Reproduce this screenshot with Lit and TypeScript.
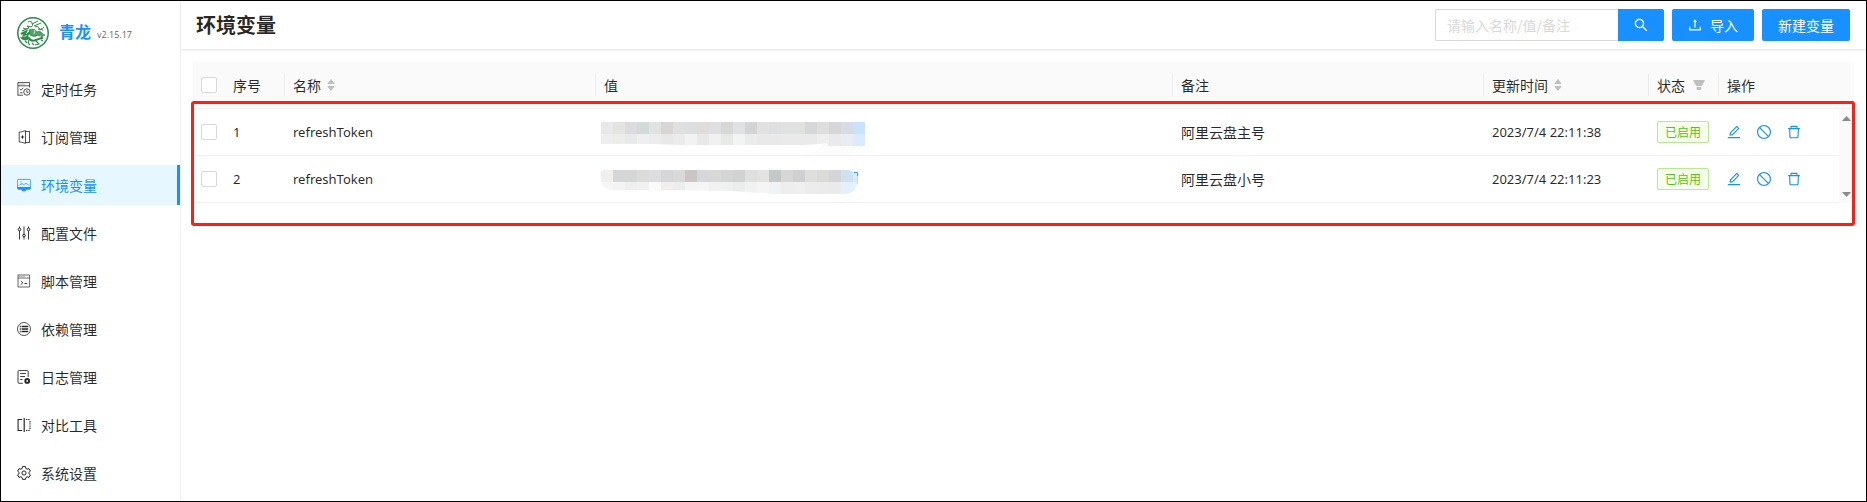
import { LitElement, html, css, svg } from "lit";
import { customElement, state } from "lit/decorators.js";

const stroke = (body: unknown) => html`<svg
  class="icon"
  viewBox="0 0 14 14"
  fill="none"
  stroke="currentColor"
  aria-hidden="true"
>
  ${body}
</svg>`;

const solid = (d: string) => html`<svg
  class="icon"
  viewBox="64 64 896 896"
  fill="currentColor"
  aria-hidden="true"
>
  <path d=${d}></path>
</svg>`;

const icons = {
  search: solid(
    "M909.6 854.5L649.9 594.8C690.2 542.7 712 479 712 412c0-80.2-31.3-155.4-87.9-212.1-56.6-56.7-132-87.9-212.1-87.9s-155.5 31.3-212.1 87.9C143.2 256.5 112 331.8 112 412c0 80.1 31.3 155.5 87.9 212.1C256.5 680.8 331.8 712 412 712c67 0 130.6-21.8 182.7-62l259.7 259.6a8.2 8.2 0 0011.6 0l43.6-43.5a8.2 8.2 0 000-11.6zM570.4 570.4C528 612.7 471.8 636 412 636s-116-23.3-158.4-65.6C211.3 528 188 471.8 188 412s23.3-116.1 65.6-158.4C296 211.3 352.2 188 412 188s116.1 23.2 158.4 65.6S636 352.2 636 412s-23.3 116.1-65.6 158.4z"
  ),
  upload: solid(
    "M400 317.7h73.9V656c0 4.4 3.6 8 8 8h60c4.4 0 8-3.6 8-8V317.7H624c6.7 0 10.4-7.7 6.3-12.9L518.3 163a8 8 0 00-12.6 0l-112 141.7c-4.1 5.3-.4 13 6.3 13zM878 626h-60c-4.4 0-8 3.6-8 8v154H214V634c0-4.4-3.6-8-8-8h-60c-4.4 0-8 3.6-8 8v198c0 17.7 14.3 32 32 32h684c17.7 0 32-14.3 32-32V634c0-4.4-3.6-8-8-8z"
  ),
  edit: solid(
    "M257.7 752c2 0 4-.2 6-.5L431.9 722c2-.4 3.9-1.3 5.3-2.8l423.9-423.9a9.96 9.96 0 000-14.1L694.9 114.9c-1.9-1.9-4.4-2.9-7.1-2.9s-5.2 1-7.1 2.9L256.8 538.8c-1.5 1.5-2.4 3.3-2.8 5.3l-29.5 168.2a33.5 33.5 0 009.4 29.8c6.6 6.4 14.9 9.9 23.8 9.9zm67.4-174.4L687.8 215l73.3 73.3-362.7 362.6-88.9 15.7 15.6-89zM880 836H144c-17.7 0-32 14.3-32 32v36c0 4.4 3.6 8 8 8h784c4.4 0 8-3.6 8-8v-36c0-17.7-14.3-32-32-32z"
  ),
  stop: solid(
    "M512 64C264.6 64 64 264.6 64 512s200.6 448 448 448 448-200.6 448-448S759.4 64 512 64zm0 820c-205.4 0-372-166.6-372-372 0-89 31.3-170.8 83.5-234.8l523.3 523.3C682.8 852.7 601 884 512 884zm288.5-137.2L277.2 223.5C341.2 171.3 423 140 512 140c205.4 0 372 166.6 372 372 0 89-31.3 170.8-83.5 234.8z"
  ),
  remove: solid(
    "M360 184h-8c4.4 0 8-3.6 8-8v8h304v-8c0 4.4 3.6 8 8 8h-8v72h72v-80c0-35.3-28.7-64-64-64H352c-35.3 0-64 28.7-64 64v80h72v-72zm504 72H160c-17.7 0-32 14.3-32 32v32c0 4.4 3.6 8 8 8h60.4l24.7 523c1.6 34.1 29.8 61 63.9 61h454c34.2 0 62.3-26.8 63.9-61l24.7-523H888c4.4 0 8-3.6 8-8v-32c0-17.7-14.3-32-32-32zM731.3 840H292.7l-24.2-512h487l-24.2 512z"
  ),
  task: stroke(svg`
    <path d="M.9 13.500V.6H12.600V5.500M1 3.800H12.500M.9 13.200H6" stroke-width=".8"/>
    <path d="M2.500 2.200H3.500M4.500 2.200H5.500M6.500 2.200H7.500" stroke-width=".6"/>
    <path d="M2.800 7L4 8.200L6.400 5.800M2.800 10.800H5.500" stroke-width=".8"/>
    <circle cx="9.900" cy="10" r="3.200" stroke-width=".8"/>
    <path d="M9.900 8.200V10.300H11.600" stroke-width=".8"/>`),
  subscribe: stroke(svg`
    <path d="M4 2L8.500 .6V13.400L4 12H2.200V2Z" stroke-width=".8"/>
    <path d="M8.500 1.500H12.500V12.500H8.500" stroke-width=".8"/>
    <path d="M5.500 5.300V8.700M3.800 7H7.200" stroke-width=".9"/>`),
  env: stroke(svg`
    <rect x=".4" y="1.400" width="13.200" height="9.600" rx=".9" stroke-width=".8"/>
    <path d="M.4 9H13.600V10.500Q13.600 11.400 12.700 11.400H1.300Q.4 11.400 .4 10.500Z" fill="currentColor" stroke="none"/>
    <path d="M2 7.600C3.600 5.800 4.600 5.400 6 6.200S8.400 5.200 9.600 5.600S11.600 7 12.200 7.800" stroke-width=".8"/>
    <circle cx="4" cy="3.900" r=".6" fill="currentColor" stroke="none"/>
    <path d="M4 11.300H10L8.600 13.200H5.400Z" fill="currentColor" stroke="none"/>`),
  config: stroke(svg`
    <path d="M2.500 5V13.500M2.500 .5V2M7 .5V8M7 11V13.500M11.500 5V13.500M11.500 .5V2" stroke-width=".9"/>
    <circle cx="2.500" cy="3.500" r="1.300"/>
    <circle cx="7" cy="9.500" r="1.300"/>
    <circle cx="11.500" cy="3.500" r="1.300"/>`),
  script: stroke(svg`
    <path d="M1 1H12.600V13H1ZM1 4H12.600" stroke-width=".7"/>
    <path d="M2.500 2.500H3.500M4.500 2.500H5.500M6.500 2.500H7.500" stroke-width=".6"/>
    <path d="M3.800 7L5.800 8.800L3.800 10.600M7.500 9.500H10.200" stroke-width=".9"/>`),
  deps: stroke(svg`
    <circle cx="7" cy="7" r="6.500" stroke-width=".8"/>
    <path d="M2.800 4.500H3.800M4.600 4.500H11.200M2.800 7H3.800M4.600 7H11.200M2.800 9.500H3.800M4.600 9.500H11.200" stroke-width="1.500"/>`),
  log: stroke(svg`
    <path d="M5.800 13.300H2Q1 13.300 1 12.300V1.600Q1 .6 2 .6H10.200Q11.200 .6 11.200 1.600V7" stroke-width=".9"/>
    <path d="M3.200 3.500H9M3.200 6.500H8M3.200 9.500H5.500" stroke-width=".9"/>
    <circle cx="10.200" cy="10.900" r="1.900" stroke-width="1.900"/>`),
  diff: stroke(svg`
    <path d="M5 1.500H1.100V12.500H5" stroke-width="1.100"/>
    <path d="M7.200 0V14" stroke-width="1.200"/>
    <path d="M9 1.500H13.400M9 12.500H13.400M13 3V12" stroke-dasharray="1.400 .8" stroke-width="1.100"/>`),
  settings: stroke(svg`
    <path stroke-width="1" stroke-linejoin="round" d="M5.6 .6H8.4L8.9 2.5L10.100 3.200L12 2.600L13.400 5.100L11.900 6.400V7.600L13.400 8.900L12 11.400L10.100 10.800L8.900 11.500L8.400 13.400H5.6L5.100 11.500L3.900 10.800L2 11.400L.6 8.900L2.100 7.600V6.400L.6 5.100L2 2.600L3.900 3.200L5.100 2.500Z"/>
    <circle cx="7" cy="7" r="2.100" stroke-width="1"/>`),
};

const menu = [
  { key: "crontab", label: "定时任务", icon: icons.task },
  { key: "subscription", label: "订阅管理", icon: icons.subscribe },
  { key: "env", label: "环境变量", icon: icons.env },
  { key: "config", label: "配置文件", icon: icons.config },
  { key: "script", label: "脚本管理", icon: icons.script },
  { key: "dependence", label: "依赖管理", icon: icons.deps },
  { key: "log", label: "日志管理", icon: icons.log },
  { key: "diff", label: "对比工具", icon: icons.diff },
  { key: "setting", label: "系统设置", icon: icons.settings },
];

const cells = (colors: string, y: number) =>
  colors
    .split(" ")
    .map(
      (c, i) =>
        svg`<rect x=${i * 12} y=${y} width="12" height="12" fill=${"#" + c} shape-rendering="crispEdges"/>`
    );

const maskedFirst = html`<svg class="masked" width="264" height="46" role="img" aria-label="已隐藏">
  ${cells("e6e8ea e3e3df dcdcdf d3d8d8 e1e2e2 d9d5d4 dfe1e1 dddee1 e0dcda dfdfe2 d7d7d5 e0e1e3 d3d4d5 e0e1e0 dedfe0 e0e1e1 e1e1df d6d7d9 dededf d5d6d7 d6dbe4 c8e3ff", 13)}
  ${cells("eeeeef ecece9 e9e9e9 edeff1 ececed e8e8e8 ebebeb f2f2f2 e8e8e8 f1f1f1 e8e8e8 f2f4f3 ebebeb e9e9e9 e9e9e9 eaeaea eaeaea eaeaea efefef eaeaea e9edf1 d9ecff", 25)}
  <path d="M0 35Q40 34 80 36H190Q215 36 226 34L216 40Q205 46 195 46H0Z" fill="#fff"/>
  <path d="M226 37H262Q255 46 246 46H202Q215 43 226 34Z" fill="#fcfcfc"/>
</svg>`;

const maskedSecond = html`<svg class="masked" width="264" height="46" role="img" aria-label="已隐藏">
  <defs>
    <clipPath id="smear">
      <path d="M2 14H247Q257 16 257 24Q256 38 242 38H172Q150 36 130 35Q90 34 10 34Q2 32 0 26V16Z"/>
    </clipPath>
  </defs>
  <g clip-path="url(#smear)">
    ${cells("f0efed d5d6d7 d5d7d7 dbdcda dddde0 d5d6d7 d9d9d7 cbc6c3 d4d8dc d8d8d7 d5d5d5 d1d2d2 dfdfe0 e2e2e0 c3c8c9 d6d6d6 cfd0d1 dededd dadad7 d4d5d7 cfe0f2 d6eaff", 14)}
    ${cells("f5f5f5 f3f3f3 efefef f1f1f1 f9fcfb f0efee eceeed f5f4f4 f5f5f5 f1f1f1 f0f0f0 ebedec f1f1f1 f5f5f5 f0f2f5 eeeeee efefef ececec ebebeb eaeaea e3effc e4f1ff", 26)}
  </g>
  <path d="M253 16.500H256.500V20" fill="none" stroke="#3a9cff"/>
  <path d="M256.500 20V28" fill="none" stroke="#b5d9ff"/>
</svg>`;

const rows = [
  { id: 1, name: "refreshToken", value: maskedFirst, remark: "阿里云盘主号", time: "2023/7/4 22:11:38" },
  { id: 2, name: "refreshToken", value: maskedSecond, remark: "阿里云盘小号", time: "2023/7/4 22:11:23" },
];

const sorter = html`<svg class="sorter" width="8" height="12" viewBox="0 0 8 12" fill="currentColor" aria-hidden="true">
  <path d="M4 0L7.6 4.4Q7.6 5 7 5H1Q.4 5 .4 4.4ZM4 12L7.6 7.6Q7.6 7 7 7H1Q.4 7 .4 7.6Z" />
</svg>`;

const logo = html`<svg class="logo" viewBox="0 0 32 32" fill="none" stroke="#2a8c46" aria-hidden="true">
  <circle cx="16" cy="16" r="15.200" stroke-width="1.500" />
  <path d="M11 5Q15 3 15 6.500Q17 8 14 10L10 9L12 11Q9 13 6 11M15 7L21 4M17 9L24 6M18 10Q21 8 22 11T27 10" stroke-width="1" />
  <path d="M4 17L9 14.500L7 18L12 16L10 20L5 21Q8 24 12 21Q14 25 19 23T26 21" stroke-width="2" />
  <path d="M12 13Q18 11 20 15Q23 13 25 16T28 18Q24 19 25 21L21 18Q18 21 13 18Z" fill="#2a8c46" fill-opacity=".8" stroke-width=".8" />
  <path d="M12 23Q10 26 13 28M19 24L22 27L18 28M8 24L10 26M24 23L26 24M21 12L26 13M15 26L17 28M5 14L10 12" stroke-width="1.100" />
  <path d="M9 17L12 14M11 18L14 20M22 20L24 19M18 13L17 17" stroke="#fff" stroke-width=".7" />
</svg>`;

@customElement("app-root")
export class AppRoot extends LitElement {
  @state() private current = "env";

  static styles = css`
    :host {
      display: flex;
      box-sizing: border-box;
      min-height: 100vh;
      border: 1px solid #000;
      background: #fff;
      color: rgba(0, 0, 0, 0.85);
      font: 14px/22px "Noto Sans CJK SC", sans-serif;
    }
    *,
    *::after {
      box-sizing: border-box;
    }
    .icon {
      display: block;
      flex: none;
      width: 14px;
      height: 14px;
    }
    button,
    input {
      font: inherit;
    }
    button {
      border: 0;
      cursor: pointer;
    }
    .sider {
      flex: none;
      width: 180px;
      border-right: 1px solid #f0f0f0;
    }
    .brand {
      display: flex;
      align-items: center;
      padding: 16px 16px 20px;
      color: #1890ff;
      text-decoration: none;
    }
    .logo {
      width: 32px;
      height: 32px;
      margin-right: 10px;
    }
    .brand-text {
      display: flex;
      align-items: baseline;
      gap: 6px;
    }
    .brand-name {
      font-size: 16px;
      font-weight: 700;
    }
    .version {
      color: #666;
      font-family: "Open Sans", sans-serif;
      font-size: 9px;
    }
    .menu {
      display: flex;
      flex-direction: column;
      gap: 8px;
    }
    .item {
      display: flex;
      align-items: center;
      gap: 10px;
      height: 40px;
      padding-left: 16px;
      color: inherit;
      text-decoration: none;
    }
    .item.active {
      border-right: 3px solid #1890ff;
      background: #e6f7ff;
      color: #1890ff;
    }
    .main {
      flex: 1;
      min-width: 0;
    }
    .header {
      display: flex;
      align-items: center;
      justify-content: space-between;
      height: 49px;
      padding: 0 16px 0 15px;
      border-bottom: 1px solid #ececec;
      box-shadow: 0 1px 3px rgba(0, 21, 41, 0.06);
    }
    h1 {
      margin: 0;
      font-size: 20px;
      line-height: 32px;
      font-weight: 700;
    }
    .tools {
      display: flex;
      gap: 8px;
    }
    .search {
      display: flex;
      width: 229px;
    }
    .search input {
      flex: 1;
      min-width: 0;
      height: 32px;
      padding: 0 11px;
      border: 1px solid #d9d9d9;
      border-right: 0;
      border-radius: 2px 0 0 2px;
      outline: 0;
    }
    .search input::placeholder {
      color: #d9d9d9;
      opacity: 1;
    }
    .primary {
      display: flex;
      align-items: center;
      justify-content: center;
      gap: 8px;
      height: 32px;
      padding: 0 16px;
      border-radius: 2px;
      background: #1890ff;
      color: #fff;
      box-shadow: 0 2px 0 rgba(0, 0, 0, 0.04);
    }
    .search .primary {
      border-radius: 0 2px 2px 0;
    }
    .panel {
      position: relative;
      margin: 12px;
    }
    .highlight {
      position: absolute;
      inset: 39px -1px -23px -2px;
      border: 3px solid #ff1e12;
      border-radius: 3px;
      pointer-events: none;
    }
    table {
      width: 100%;
      table-layout: fixed;
      border-collapse: separate;
      border-spacing: 0;
    }
    .c-check {
      width: 32px;
    }
    .c-index {
      width: 60px;
    }
    .c-text {
      width: 311px;
    }
    .c-time {
      width: 165px;
    }
    .c-status {
      width: 70px;
    }
    .c-action {
      width: 120px;
    }
    .c-bar {
      width: 15px;
    }
    th,
    td {
      height: 47px;
      padding: 0 8px;
      border-bottom: 1px solid #f0f0f0;
      text-align: left;
      font-weight: 400;
      vertical-align: middle;
    }
    th {
      background: #fafafa;
    }
    th.split {
      background: linear-gradient(#ebebeb, #ebebeb) right center / 1px 22px no-repeat #fafafa;
    }
    .latin {
      font-family: "Noto Sans", sans-serif;
      font-size: 13px;
    }
    .head {
      display: flex;
      align-items: center;
      gap: 6px;
    }
    .sorter,
    .filter {
      color: #bfbfbf;
    }
    .filter {
      margin-left: 2px;
    }
    input[type="checkbox"] {
      display: block;
      width: 16px;
      height: 16px;
      margin: 0;
      border: 1px solid #d9d9d9;
      border-radius: 2px;
      background: #fff;
      appearance: none;
    }
    input[type="checkbox"]:checked {
      border-color: #1890ff;
      background: #1890ff;
    }
    td.value {
      padding: 0 0 0 5px;
    }
    .masked {
      display: block;
    }
    .tag {
      display: block;
      width: max-content;
      padding: 0 7px;
      border: 1px solid #b7eb8f;
      border-radius: 2px;
      background: #f6ffed;
      color: #52c41a;
      font-size: 12px;
      line-height: 20px;
    }
    .actions {
      display: flex;
      gap: 16px;
    }
    .actions button {
      padding: 0;
      background: none;
      color: #1890ff;
    }
    td.bar {
      padding: 0;
      border: 0;
      background: #fafafa;
    }
    .track {
      display: flex;
      flex-direction: column;
      align-items: center;
      justify-content: space-between;
      height: 94px;
      padding: 7px 0 6px;
      color: #8a8a8a;
    }
  `;

  render() {
    return html`
      <aside class="sider">
        <a class="brand" href="#env">
          ${logo}
          <span class="brand-text">
            <span class="brand-name">青龙</span>
            <span class="version">v2.15.17</span>
          </span>
        </a>
        <nav class="menu">
          ${menu.map(
            (m) => html`<a
              class=${m.key === this.current ? "item active" : "item"}
              href=${"#" + m.key}
              @click=${() => (this.current = m.key)}
              >${m.icon}<span>${m.label}</span></a
            >`
          )}
        </nav>
      </aside>
      <main class="main">
        <header class="header">
          <h1>环境变量</h1>
          <div class="tools">
            <form class="search" @submit=${(e: Event) => e.preventDefault()}>
              <input type="text" placeholder="请输入名称/值/备注" aria-label="请输入名称/值/备注" />
              <button class="primary" aria-label="搜索">${icons.search}</button>
            </form>
            <button class="primary">${icons.upload}<span>导入</span></button>
            <button class="primary">新建变量</button>
          </div>
        </header>
        <section class="panel">
          <table>
            <colgroup>
              <col class="c-check" />
              <col class="c-index" />
              <col class="c-text" />
              <col />
              <col class="c-text" />
              <col class="c-time" />
              <col class="c-status" />
              <col class="c-action" />
              <col class="c-bar" />
            </colgroup>
            <thead>
              <tr>
                <th><input type="checkbox" aria-label="全选" /></th>
                <th class="split">序号</th>
                <th class="split"><div class="head">名称${sorter}</div></th>
                <th class="split">值</th>
                <th class="split">备注</th>
                <th class="split"><div class="head">更新时间${sorter}</div></th>
                <th class="split">
                  <div class="head">
                    状态<svg class="filter" width="12" height="10" viewBox="0 0 12 10" fill="currentColor" aria-hidden="true">
                      <path d="M.7 0H11.3Q12 .3 11.700 1L8.700 6H3.300L.3 1Q0 .3 .7 0ZM3.700 7H8.300V9.500Q8.300 10 7.800 10H4.200Q3.700 10 3.700 9.500Z" />
                    </svg>
                  </div>
                </th>
                <th>操作</th>
                <th></th>
              </tr>
            </thead>
            <tbody>
              ${rows.map(
                (r, i) => html`<tr>
                  <td><input type="checkbox" aria-label=${"选择 " + r.id} /></td>
                  <td class="latin">${r.id}</td>
                  <td class="latin">${r.name}</td>
                  <td class="value">${r.value}</td>
                  <td>${r.remark}</td>
                  <td class="latin">${r.time}</td>
                  <td><span class="tag">已启用</span></td>
                  <td>
                    <div class="actions">
                      <button aria-label="编辑">${icons.edit}</button>
                      <button aria-label="禁用">${icons.stop}</button>
                      <button aria-label="删除">${icons.remove}</button>
                    </div>
                  </td>
                  ${i === 0
                    ? html`<td class="bar" rowspan=${rows.length}>
                        <div class="track" aria-hidden="true">
                          <svg width="9" height="5" fill="currentColor"><path d="M4.500 0L9 5H0Z" /></svg>
                          <svg width="9" height="5" fill="currentColor"><path d="M0 0H9L4.500 5Z" /></svg>
                        </div>
                      </td>`
                    : null}
                </tr>`
              )}
            </tbody>
          </table>
          <div class="highlight"></div>
        </section>
      </main>
    `;
  }
}
